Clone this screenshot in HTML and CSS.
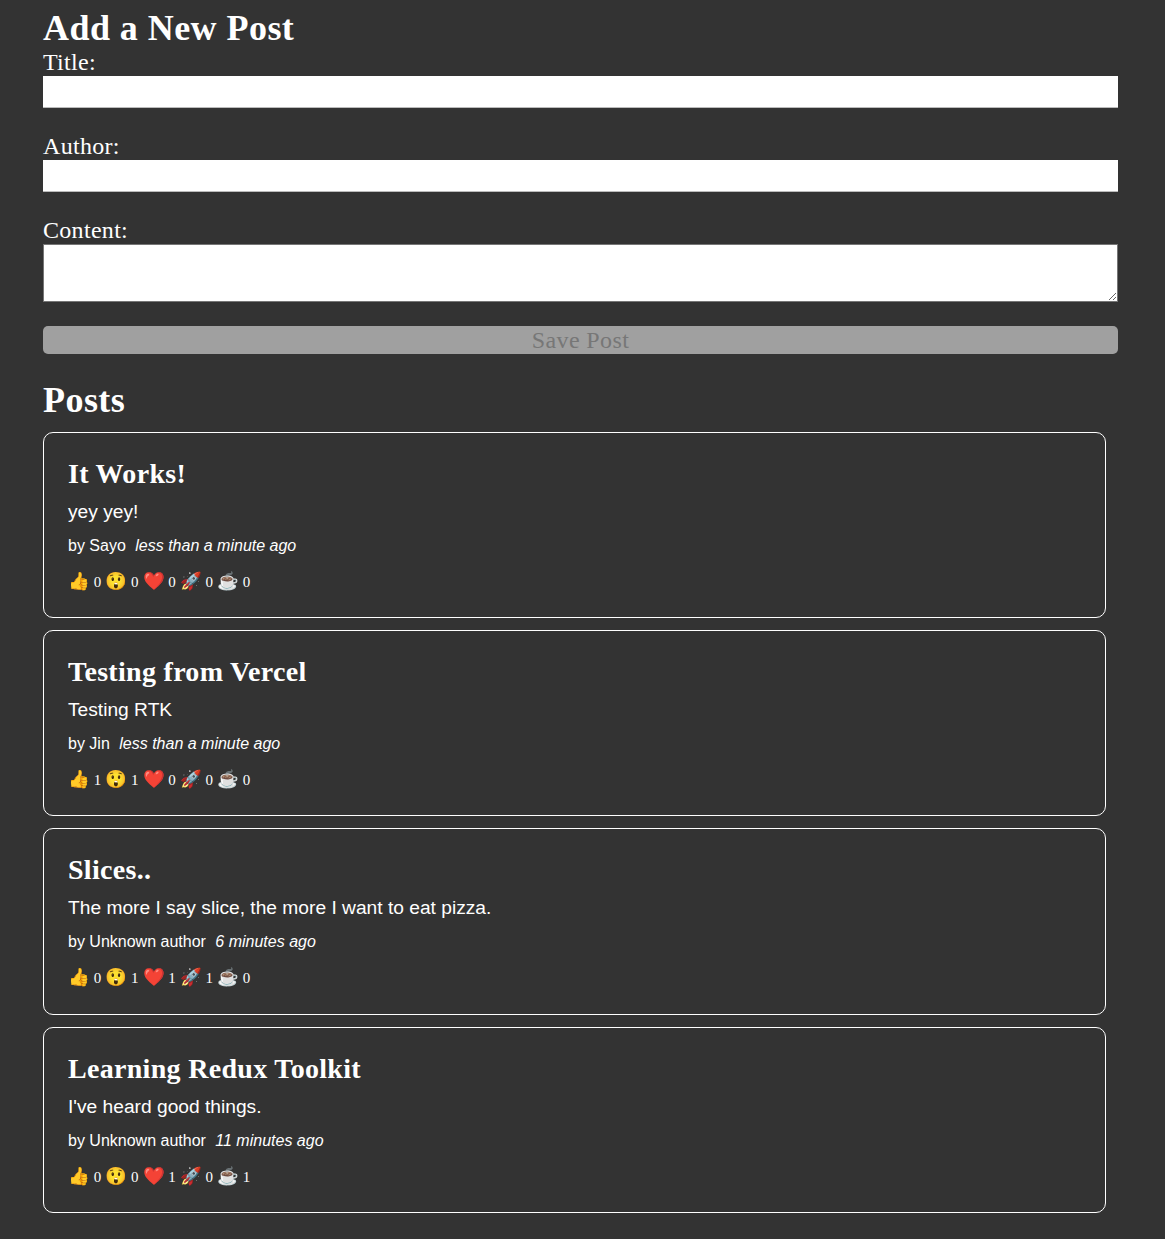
FILE: index.html
```html
<!DOCTYPE html>
<html lang="en">
<head>
  <meta charset="UTF-8" />
  <meta name="viewport" content="width=device-width, initial-scale=1.0" />
  <title>Redux Blog</title>
  <link rel="stylesheet" href="styles.css">
</head>
<body>
  <section class="add-post">
    <h2>Add a New Post</h2>
    <form>
      <label for="postTitle">Title:</label>
      <input type="text" id="postTitle" />
      <label for="postAuthor">Author:</label>
      <input type="text" id="postAuthor" />
      <label for="postContent">Content:</label>
      <textarea id="postContent"></textarea>
      <button type="button" disabled>Save Post</button>
    </form>
  </section>
  <section class="posts">
    <h2>Posts</h2>
    <article>
      <h3>It Works!</h3>
      <p class="excerpt">yey yey!</p>
      <p class="credit">by Sayo <i>less than a minute ago</i></p>
      <div class="reactions">
        <button><span>👍</span> 0</button><button><span>😲</span> 0</button><button><span>❤️</span> 0</button><button><span>🚀</span> 0</button><button><span>☕</span> 0</button>
      </div>
    </article>
    <article>
      <h3>Testing from Vercel</h3>
      <p class="excerpt">Testing RTK</p>
      <p class="credit">by Jin <i>less than a minute ago</i></p>
      <div class="reactions">
        <button><span>👍</span> 1</button><button><span>😲</span> 1</button><button><span>❤️</span> 0</button><button><span>🚀</span> 0</button><button><span>☕</span> 0</button>
      </div>
    </article>
    <article>
      <h3>Slices..</h3>
      <p class="excerpt">The more I say slice, the more I want to eat pizza.</p>
      <p class="credit">by Unknown author <i>6 minutes ago</i></p>
      <div class="reactions">
        <button><span>👍</span> 0</button><button><span>😲</span> 1</button><button><span>❤️</span> 1</button><button><span>🚀</span> 1</button><button><span>☕</span> 0</button>
      </div>
    </article>
    <article>
      <h3>Learning Redux Toolkit</h3>
      <p class="excerpt">I've heard good things.</p>
      <p class="credit">by Unknown author <i>11 minutes ago</i></p>
      <div class="reactions">
        <button><span>👍</span> 0</button><button><span>😲</span> 0</button><button><span>❤️</span> 1</button><button><span>🚀</span> 0</button><button><span>☕</span> 1</button>
      </div>
    </article>
  </section>
</body>
</html>
```
FILE: styles.css
```css
* {
  box-sizing: border-box;
  margin: 0;
}
body {
  background: #333;
  color: #fff;
  font-family: "Liberation Serif", serif;
  padding: 8px 47px 0 43px;
  height: 1239px;
  overflow: hidden;
}
h2 {
  font-size: 36px;
  line-height: 40px;
  font-weight: bold;
  letter-spacing: 0.45px;
}
form {
  display: flex;
  flex-direction: column;
}
label {
  font-size: 24px;
  line-height: 28px;
  letter-spacing: 0.3px;
}
input,
textarea {
  display: block;
  width: 100%;
  background: #fff;
  font-size: 22px;
  margin-bottom: 24px;
}
input {
  height: 32px;
  border: none;
  border-bottom: 1px solid #bbb;
}
textarea {
  height: 58px;
  border: 1px solid #767676;
}
form button {
  height: 28px;
  padding: 0;
  border: none;
  border-radius: 5px;
  background: #a0a0a0;
  color: #777;
  font-family: inherit;
  font-size: 24px;
  line-height: 28px;
  letter-spacing: 0.4px;
}
.posts {
  margin-top: 26px;
  width: 1063px;
}
.posts h2 {
  margin-bottom: 12px;
}
article {
  height: 186px;
  margin-bottom: 12px;
  padding: 24px 24px 0;
  border: 1px solid #fff;
  border-radius: 10px;
}
article:nth-of-type(3) {
  height: 187px;
}
h3 {
  font-size: 28px;
  line-height: 34px;
  font-weight: bold;
  letter-spacing: 0.3px;
}
.excerpt {
  font-family: "Liberation Sans", sans-serif;
  font-size: 19.2px;
  line-height: 22px;
  margin-top: 10px;
}
.credit {
  font-family: "Liberation Sans", sans-serif;
  font-size: 16px;
  line-height: 18px;
  margin-top: 14px;
}
.credit i {
  margin-left: 5px;
}
.reactions {
  display: flex;
  margin-top: 16px;
}
.reactions button {
  padding: 0;
  margin-right: 4px;
  background: none;
  border: none;
  color: #fff;
  font-family: "Liberation Serif", serif;
  font-size: 15px;
  line-height: 21px;
}
.reactions span {
  font-size: 17.5px;
}
```
